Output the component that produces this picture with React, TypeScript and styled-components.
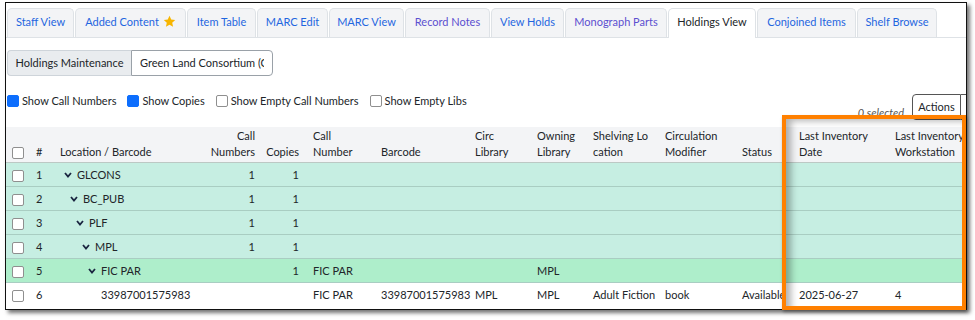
import React from "react"
import styled, { createGlobalStyle } from "styled-components"

// Global
const GlobalStyle = createGlobalStyle`
  html, body {
    margin: 0;
    padding: 0;
    background: #fff;
  }
  body {
    font-family: Lato, "Liberation Sans", sans-serif;
    font-size: 11px;
    color: #212529;
  }
`

// Frame
const Page = styled.div`
  position: relative;
  width: 975px;
  height: 320px;
  padding: 2px 0 0 5px;
  box-sizing: border-box;
`

const Frame = styled.div`
  width: 962px;
  height: 308px;
  box-sizing: border-box;
  border: 1px solid #111;
  box-shadow: 3px 3px 4px rgba(0, 0, 0, 0.55);
  background: #fff;
  overflow: hidden;
`

const Highlight = styled.div`
  position: absolute;
  left: 782px;
  top: 115px;
  width: 184px;
  height: 195px;
  box-sizing: border-box;
  border: 4px solid #ff8000;
  box-shadow: inset 8px 5px 7px -3px rgba(0, 0, 0, 0.3), 1px 2px 3px rgba(0, 0, 0, 0.35);
  pointer-events: none;
`

// Tabs
const TabBar = styled.div`
  display: flex;
  gap: 1px;
  padding: 5px 0 0 1px;
  border-bottom: 1px solid #dee2e6;
`

const Tab = styled.div<{ $w: number; $active?: boolean; $visited?: boolean }>`
  width: ${p => p.$w}px;
  height: ${p => (p.$active ? "30px" : "29px")};
  box-sizing: border-box;
  display: flex;
  align-items: center;
  justify-content: center;
  gap: 4px;
  padding-bottom: ${p => (p.$active ? "4px" : "3px")};
  border: 1px solid #dee2e6;
  border-bottom: none;
  border-radius: 5px 5px 0 0;
  background: ${p => (p.$active ? "#fff" : "#f3f4f6")};
  color: ${p => (p.$active ? "#212529" : p.$visited ? "#5b4fd0" : "#1f66e0")};
  margin-bottom: ${p => (p.$active ? "-1px" : "0")};
  white-space: nowrap;
`

// Toolbar
const Toolbar = styled.div`
  display: flex;
  margin: 12px 0 0 1px;
  height: 26px;
`

const GroupLabel = styled.div`
  width: 124px;
  box-sizing: border-box;
  display: flex;
  align-items: center;
  justify-content: center;
  padding-bottom: 1px;
  background: #e9ecef;
  border: 1px solid #ced4da;
  border-right: none;
  border-radius: 4px 0 0 4px;
`

const OrgInput = styled.input`
  width: 142px;
  box-sizing: border-box;
  border: 1px solid #9aa1a8;
  border-radius: 0 4px 4px 0;
  padding: 0 8px 1px;
  font: inherit;
  color: #212529;
  background: #fff;
  outline: none;
`

// Options + actions
const OptionsRow = styled.div`
  display: flex;
  align-items: flex-start;
  margin: 18px 0 0 1px;
  height: 26px;
`

const Option = styled.label`
  display: flex;
  align-items: center;
  gap: 3px;
  margin: 0 11px 0 0;
  white-space: nowrap;
`

const Box = styled.span<{ $on?: boolean }>`
  width: 12px;
  height: 12px;
  box-sizing: border-box;
  border-radius: 2px;
  border: 1px solid ${p => (p.$on ? "#0d6efd" : "#8f8f8f")};
  background: ${p => (p.$on ? "#0d6efd" : "#fff")};
  display: inline-block;
  vertical-align: middle;
  flex-shrink: 0;
`

const Actions = styled.div`
  margin-left: auto;
  margin-right: -19px;
  display: flex;
  align-items: flex-end;
  height: 26px;
`

const Selected = styled.span`
  font-style: italic;
  color: #555;
  margin: 0 8px 1px 0;
`

const ActionButton = styled.div`
  width: 49px;
  height: 26px;
  box-sizing: border-box;
  border: 1px solid #555;
  border-radius: 4px 0 0 4px;
  display: flex;
  align-items: center;
  justify-content: center;
  padding-bottom: 2px;
`

const Toggle = styled.div`
  width: 24px;
  height: 26px;
  box-sizing: border-box;
  border: 1px solid #555;
  border-left: none;
`

// Table
const Grid = styled.table`
  margin-top: 7px;
  width: 975px;
  table-layout: fixed;
  border-collapse: collapse;
`

const Col = styled.col<{ $w: number }>`
  width: ${p => p.$w}px;
`

const Head = styled.th<{ $right?: boolean; $pl?: number }>`
  background: #f3f4f6;
  font-weight: normal;
  text-align: ${p => (p.$right ? "right" : "left")};
  vertical-align: bottom;
  line-height: 16px;
  padding: 1px 4px 2px ${p => p.$pl ?? 4}px;
  border-bottom: 1px solid #bcc8c4;
  white-space: nowrap;
`

const Row = styled.tr<{ $tone: "group" | "active" | "plain" }>`
  background: ${p => (p.$tone === "group" ? "#c6eee2" : p.$tone === "active" ? "#aeeecb" : "#fff")};
  border-bottom: 1px solid ${p => (p.$tone === "plain" ? "#fff" : "#a9cdc2")};
`

const Cell = styled.td<{ $right?: boolean; $pl?: number }>`
  height: 23px;
  padding: 0 4px 0 ${p => p.$pl ?? 4}px;
  text-align: ${p => (p.$right ? "right" : "left")};
  white-space: nowrap;
`

const Loc = styled.span<{ $indent: number }>`
  display: flex;
  align-items: center;
  gap: 5px;
  padding-left: ${p => p.$indent}px;
`

const Chevron = () => (
  <svg width="8" height="6" viewBox="0 0 8 6">
    <polyline points="1,1 4,4.5 7,1" fill="none" stroke="#1a2540" strokeWidth="1.8" />
  </svg>
)

const Star = () => (
  <svg width="13" height="13" viewBox="0 0 24 24">
    <path
      d="M12 1.5l3.2 6.9 7.3.8-5.5 5 1.6 7.3L12 17.8l-6.6 3.7 1.6-7.3-5.5-5 7.3-.8z"
      fill="#f7b500"
    />
  </svg>
)

// Data
const tabs = [
  { label: "Staff View", w: 67 },
  { label: "Added Content", w: 111, star: true },
  { label: "Item Table", w: 69 },
  { label: "MARC Edit", w: 71 },
  { label: "MARC View", w: 75 },
  { label: "Record Notes", w: 85, visited: true },
  { label: "View Holds", w: 73 },
  { label: "Monograph Parts", w: 102, visited: true },
  { label: "Holdings View", w: 88, active: true },
  { label: "Conjoined Items", w: 99 },
  { label: "Shelf Browse", w: 80 },
]

const widths = [26, 24, 148, 55, 44, 74, 94, 62, 56, 72, 77, 57, 96, 90]

interface Holding {
  n: number
  level: number
  name: string
  leaf?: boolean
  cns?: string
  copies?: string
  callNumber?: string
  barcode?: string
  circ?: string
  owning?: string
  shelving?: string
  modifier?: string
  status?: string
  date?: string
  ws?: string
  tone: "group" | "active" | "plain"
}

const rows: Holding[] = [
  { n: 1, level: 0, name: "GLCONS", cns: "1", copies: "1", tone: "group" },
  { n: 2, level: 1, name: "BC_PUB", cns: "1", copies: "1", tone: "group" },
  { n: 3, level: 2, name: "PLF", cns: "1", copies: "1", tone: "group" },
  { n: 4, level: 3, name: "MPL", cns: "1", copies: "1", tone: "group" },
  { n: 5, level: 4, name: "FIC PAR", copies: "1", callNumber: "FIC PAR", owning: "MPL", tone: "active" },
  {
    n: 6,
    level: 5,
    name: "33987001575983",
    leaf: true,
    callNumber: "FIC PAR",
    barcode: "33987001575983",
    circ: "MPL",
    owning: "MPL",
    shelving: "Adult Fiction",
    modifier: "book",
    status: "Available",
    date: "2025-06-27",
    ws: "4",
    tone: "plain",
  },
]

// Page
const App: React.FC = () => {
  return (
    <Page>
      <GlobalStyle />
      <Frame>
        <TabBar>
          {tabs.map(t => (
            <Tab key={t.label} $w={t.w} $active={t.active} $visited={t.visited}>
              {t.label}
              {t.star && <Star />}
            </Tab>
          ))}
        </TabBar>

        <Toolbar>
          <GroupLabel>Holdings Maintenance</GroupLabel>
          <OrgInput readOnly value="Green Land Consortium (GLCONS)" />
        </Toolbar>

        <OptionsRow>
          <Option>
            <Box $on />
            Show Call Numbers
          </Option>
          <Option>
            <Box $on />
            Show Copies
          </Option>
          <Option>
            <Box />
            Show Empty Call Numbers
          </Option>
          <Option>
            <Box />
            Show Empty Libs
          </Option>
          <Actions>
            <Selected>0 selected</Selected>
            <ActionButton>Actions</ActionButton>
            <Toggle />
          </Actions>
        </OptionsRow>

        <Grid>
          <colgroup>
            {widths.map((w, i) => (
              <Col key={i} $w={w} />
            ))}
          </colgroup>
          <thead>
            <tr>
              <Head $pl={6}>
                <Box />
              </Head>
              <Head>#</Head>
              <Head>Location / Barcode</Head>
              <Head $right>
                Call
                <br />
                Numbers
              </Head>
              <Head $right>Copies</Head>
              <Head $pl={10}>
                Call
                <br />
                Number
              </Head>
              <Head>Barcode</Head>
              <Head>
                Circ
                <br />
                Library
              </Head>
              <Head>
                Owning
                <br />
                Library
              </Head>
              <Head>
                Shelving Lo
                <br />
                cation
              </Head>
              <Head>
                Circulation
                <br />
                Modifier
              </Head>
              <Head>Status</Head>
              <Head>
                Last Inventory
                <br />
                Date
              </Head>
              <Head>
                Last Inventory
                <br />
                Workstation
              </Head>
            </tr>
          </thead>
          <tbody>
            {rows.map(r => (
              <Row key={r.n} $tone={r.tone}>
                <Cell $pl={6}>
                  <Box />
                </Cell>
                <Cell>{r.n}</Cell>
                <Cell>
                  {r.leaf ? (
                    <Loc $indent={41}>{r.name}</Loc>
                  ) : (
                    <Loc $indent={4 + r.level * 6}>
                      <Chevron />
                      {r.name}
                    </Loc>
                  )}
                </Cell>
                <Cell $right>{r.cns}</Cell>
                <Cell $right>{r.copies}</Cell>
                <Cell $pl={10}>{r.callNumber}</Cell>
                <Cell>{r.barcode}</Cell>
                <Cell>{r.circ}</Cell>
                <Cell>{r.owning}</Cell>
                <Cell>{r.shelving}</Cell>
                <Cell>{r.modifier}</Cell>
                <Cell>{r.status}</Cell>
                <Cell>{r.date}</Cell>
                <Cell>{r.ws}</Cell>
              </Row>
            ))}
          </tbody>
        </Grid>
      </Frame>
      <Highlight />
    </Page>
  )
}

export default App
